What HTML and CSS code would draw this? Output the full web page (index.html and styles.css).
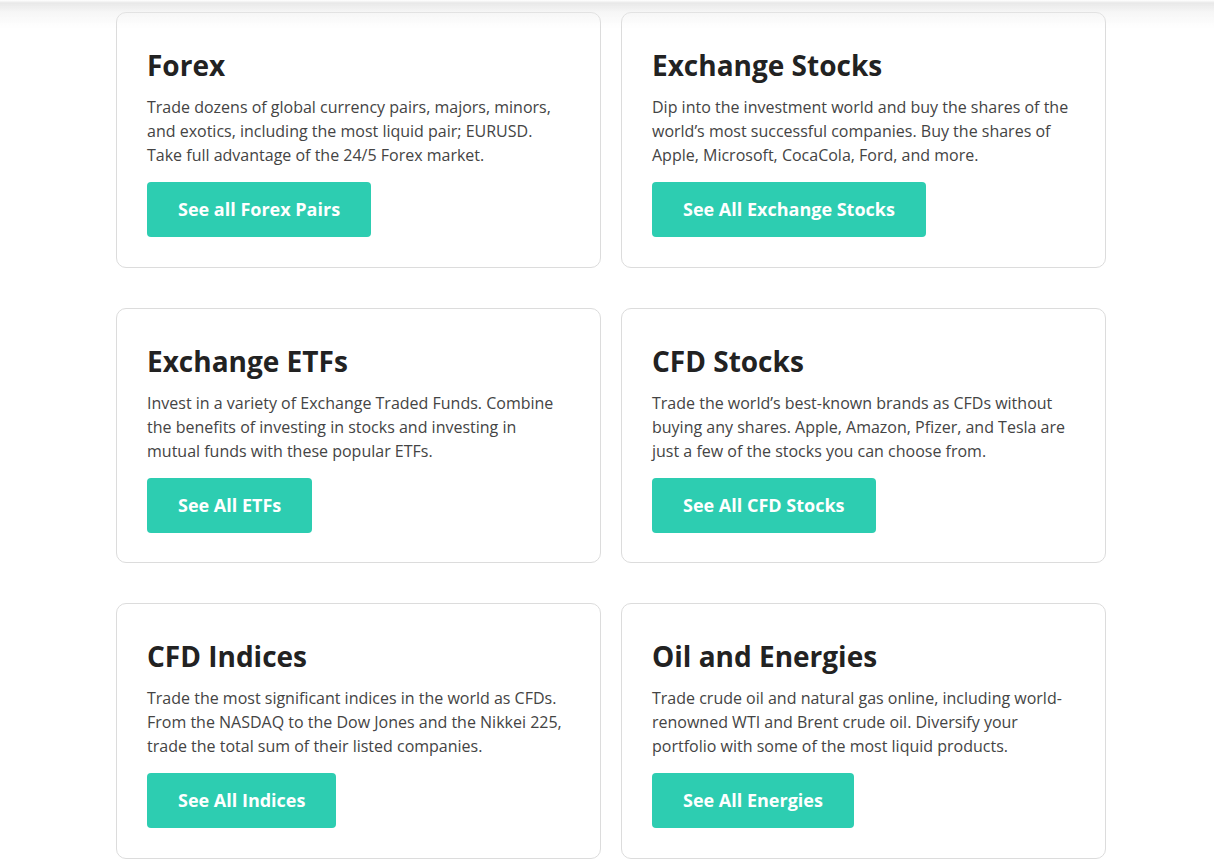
FILE: index.html
```html
<!DOCTYPE html>
<html lang="en">
<head>
<meta charset="utf-8">
<title>Markets</title>
<link rel="stylesheet" href="styles.css">
</head>
<body>
<div class="header-shade"></div>
<main class="markets">
  <section class="market-card">
    <h2 class="market-title">Forex</h2>
    <p class="market-text">Trade dozens of global currency pairs, majors, minors, and exotics, including the most liquid pair; EURUSD. Take full advantage of the 24/5 Forex market.</p>
    <a class="market-btn" href="#">See all Forex Pairs</a>
  </section>
  <section class="market-card">
    <h2 class="market-title">Exchange Stocks</h2>
    <p class="market-text">Dip into the investment world and buy the shares of the world’s most successful companies. Buy the shares of Apple, Microsoft, CocaCola, Ford, and more.</p>
    <a class="market-btn" href="#">See All Exchange Stocks</a>
  </section>
  <section class="market-card">
    <h2 class="market-title">Exchange ETFs</h2>
    <p class="market-text">Invest in a variety of Exchange Traded Funds. Combine the benefits of investing in stocks and investing in mutual funds with these popular ETFs.</p>
    <a class="market-btn" href="#">See All ETFs</a>
  </section>
  <section class="market-card">
    <h2 class="market-title">CFD Stocks</h2>
    <p class="market-text">Trade the world’s best-known brands as CFDs without buying any shares. Apple, Amazon, Pfizer, and Tesla are just a few of the stocks you can choose from.</p>
    <a class="market-btn" href="#">See All CFD Stocks</a>
  </section>
  <section class="market-card">
    <h2 class="market-title">CFD Indices</h2>
    <p class="market-text">Trade the most significant indices in the world as CFDs. From the NASDAQ to the Dow Jones and the Nikkei 225, trade the total sum of their listed companies.</p>
    <a class="market-btn" href="#">See All Indices</a>
  </section>
  <section class="market-card">
    <h2 class="market-title">Oil and Energies</h2>
    <p class="market-text">Trade crude oil and natural gas online, including world-renowned WTI and Brent crude oil. Diversify your portfolio with some of the most liquid products.</p>
    <a class="market-btn" href="#">See All Energies</a>
  </section>
</main>
</body>
</html>
```
FILE: styles.css
```css
* {
  box-sizing: border-box;
}

html, body {
  margin: 0;
  padding: 0;
  background: #fff;
}

body {
  font-family: "Open Sans", "Noto Sans", "Liberation Sans", sans-serif;
  color: #444;
  overflow: hidden;
}

.header-shade {
  position: fixed;
  top: 0;
  left: 0;
  right: 0;
  height: 28px;
  pointer-events: none;
  z-index: 5;
  background: linear-gradient(to bottom,
    rgba(255, 255, 255, 0.6) 0px,
    rgba(225, 225, 225, 0.75) 3px,
    rgba(235, 235, 235, 0.45) 12px,
    rgba(255, 255, 255, 0) 28px);
}

.markets {
  display: grid;
  grid-template-columns: 485px 485px;
  column-gap: 20px;
  row-gap: 40px;
  padding: 12px 0 0 116px;
}

.market-card {
  display: flex;
  flex-direction: column;
  align-items: flex-start;
  height: 255.5px;
  padding: 31px 30px 30px 30px;
  border: 1px solid #dcdcdc;
  border-radius: 10px;
  background: #fff;
}

.market-title {
  margin: 0;
  font-size: 28px;
  line-height: 42px;
  font-weight: 700;
  color: #222;
}

.market-text {
  margin: 9px 0 0;
  font-size: 16px;
  line-height: 24px;
  color: #444;
}

.market-btn {
  display: inline-block;
  margin-top: 15px;
  padding: 0 31px;
  height: 55px;
  line-height: 55px;
  border-radius: 4px;
  background: #2dcdb1;
  color: #fff;
  font-size: 18px;
  font-weight: 700;
  text-decoration: none;
}
```
